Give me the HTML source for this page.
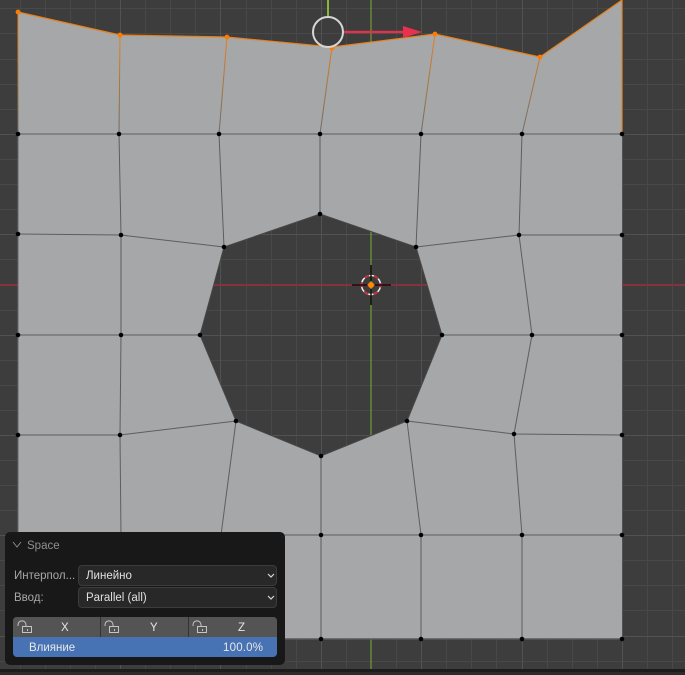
<!DOCTYPE html>
<html><head><meta charset="utf-8">
<style>
html,body{margin:0;padding:0;width:685px;height:675px;overflow:hidden;background:#3d3d3d;font-family:"Liberation Sans","Noto Sans CJK SC",sans-serif}
svg{position:absolute;left:0;top:0}
.t{position:absolute;font-size:11.5px;line-height:14px;white-space:nowrap;color:#d8d8d8}
#panel{position:absolute;left:5px;top:532px;width:280px;height:133px;background:#181818;border-radius:5px}
.dd{position:absolute;left:78px;width:197px;height:19px;background:#282828;border:1px solid #3c3c3c;border-radius:4px;box-sizing:content-box}
</style></head><body>
<svg width="685" height="675" viewBox="0 0 685 675">
<defs>
<linearGradient id="g0" gradientUnits="userSpaceOnUse" x1="0" y1="35" x2="0" y2="134"><stop offset="0" stop-color="#e8801a"/><stop offset="1" stop-color="#6a6a6a"/></linearGradient>
</defs>
<g stroke="#484848" stroke-width="1" shape-rendering="crispEdges">
<path d="M20.500 0V670M45.500 0V670M70.500 0V670M95.500 0V670M145.500 0V670M170.500 0V670M195.500 0V670M246.500 0V670M271.500 0V670M296.500 0V670M346.500 0V670M396.500 0V670M446.500 0V670M471.500 0V670M496.500 0V670M547.500 0V670M572.500 0V670M597.500 0V670M647.500 0V670M672.500 0V670"/>
<path d="M0 8.500H685M0 33.500H685M0 59.500H685M0 84.500H685M0 109.500H685M0 159.500H685M0 184.500H685M0 209.500H685M0 259.500H685M0 310.500H685M0 360.500H685M0 385.500H685M0 410.500H685M0 460.500H685M0 485.500H685M0 510.500H685M0 560.500H685M0 585.500H685M0 610.500H685M0 661.500H685"/>
</g>
<g stroke="#525252" stroke-width="1" shape-rendering="crispEdges">
<path d="M120.500 0V670M220.500 0V670M321.500 0V670M421.500 0V670M522.500 0V670M622.500 0V670"/>
<path d="M0 134.500H685M0 234.500H685M0 335.500H685M0 435.500H685M0 535.500H685M0 636.500H685"/>
</g>
<path d="M0 285H685" stroke="#85323f" stroke-width="2"/>
<path d="M371 0V670" stroke="#6a8f3a" stroke-width="1.400"/>
<path fill-rule="evenodd" fill="#a6a7a8" d="M18 12L120 35L227 37L332 47L435 34L540 57L622 0V639H18ZM320 214L416 247L442 335L407 421L321 456L236 421L200 335L224 247Z"/>
<g fill="none" stroke="#5e5e5e" stroke-width="1">
<path d="M18 134H622M18 234L121 235L224 247M416 247L519 235L622 235M18 335H121L200 335M442 335H532L622 335M18 435H120L236 421M407 421L514 434L622 435M18 535H622"/>
<path d="M119 134L121 235V335L120 435L121 535L120 639M219 134L224 247M236 421L221 535L220 639M320 134V214M321 456V639M421 134L416 247M407 421L421 535V639M522 134L519 235L532 335L514 434L522 535V639"/>
<path d="M320 214L416 247L442 335L407 421L321 456L236 421L200 335L224 247Z" stroke="#474747"/>
<path d="M18 134V639H622" stroke="#666"/>
<path d="M18 639H622" stroke="#5a5a5a" stroke-width="1.500"/>
</g>
<g fill="none" stroke-width="1">
<path d="M120 35L119 134" stroke="url(#g0)"/>
<path d="M227 37L219 134" stroke="url(#g0)"/>
<path d="M332 47L320 134" stroke="url(#g0)"/>
<path d="M435 34L421 134" stroke="url(#g0)"/>
<path d="M540 57L522 134" stroke="url(#g0)"/>
<path d="M18 12L18 134" stroke="url(#g0)"/>
<path d="M622 0L622 134" stroke="#e8801a"/>
<path d="M18 12L120 35L227 37L332 47L435 34L540 57L622 0" stroke="#e8801a" stroke-width="1.200"/>
</g>
<g fill="none" stroke="#000" stroke-width="4.600" stroke-linecap="round">
<path d="M18 134h0M119 134h0M219 134h0M320 134h0M421 134h0M522 134h0M622 134h0"/>
<path d="M18 234h0M121 235h0M224 247h0M320 214h0M416 247h0M519 235h0M622 235h0"/>
<path d="M18 335h0M121 335h0M200 335h0M442 335h0M532 335h0M622 335h0"/>
<path d="M18 435h0M120 435h0M236 421h0M321 456h0M407 421h0M514 434h0M622 435h0"/>
<path d="M121 535h0M221 535h0M321 535h0M421 535h0M522 535h0M622 535h0"/>
<path d="M120 639h0M220 639h0M321 639h0M421 639h0M522 639h0M622 639h0"/>
</g>
<path d="M18 12h0M120 35h0M227 37h0M332 48h0M435 34h0M540 57h0" fill="none" stroke="#ff7a00" stroke-width="4.800" stroke-linecap="round"/>
<path d="M328 0V17" stroke="#86b83a" stroke-width="2"/>
<path d="M344 32H404" stroke="#d9354f" stroke-width="2.500"/>
<path d="M403 26L422 32L403 38Z" fill="#e8304f"/>
<circle cx="328" cy="32" r="15" fill="none" stroke="#d6d6d6" stroke-width="2"/>
<circle cx="371" cy="285" r="9.500" fill="none" stroke="#f2f2f2" stroke-width="1.500"/>
<circle cx="371" cy="285" r="9.500" fill="none" stroke="#d8202a" stroke-width="1.500" stroke-dasharray="5 5" stroke-dashoffset="2.500"/>
<path d="M352 285H367M375 285H391M371 265V281M371 289V305" stroke="#000" stroke-width="1.300"/>
<circle cx="371" cy="285" r="3" fill="#ff8a00"/>
<rect x="0" y="669" width="685" height="3" fill="#1c1c1c"/>
<rect x="0" y="672" width="685" height="3" fill="#2b2b2b"/>
</svg>

<div id="panel"></div>
<div class="t" style="left:27px;top:539px;color:#8f8f8f;font-size:11.500px">Space</div>
<div class="t" style="left:14px;top:569px;color:#a8a8a8">Интерпол...</div>
<div class="t" style="left:14px;top:591px;color:#a8a8a8">Ввод:</div>
<div class="dd" style="top:565px"></div>
<div class="dd" style="top:587px"></div>
<div class="t" style="left:86px;top:569px;color:#e0e0e0">Линейно</div>
<div class="t" style="left:86px;top:591px;color:#e0e0e0">Parallel (all)</div>
<div style="position:absolute;left:13px;top:617px;width:264px;height:40px;background:#4772b3;border-radius:4px;overflow:hidden">
  <div style="position:absolute;left:0;top:0;width:264px;height:20px;background:#545454"></div>
  <div style="position:absolute;left:87px;top:0;width:1px;height:20px;background:#333"></div>
  <div style="position:absolute;left:175px;top:0;width:1px;height:20px;background:#333"></div>
</div>
<div class="t" style="left:61px;top:621px;color:#e6e6e6">X</div>
<div class="t" style="left:150px;top:621px;color:#e6e6e6">Y</div>
<div class="t" style="left:238px;top:621px;color:#e6e6e6">Z</div>
<div class="t" style="left:29px;top:641px;color:#e8e8e8">Влияние</div>
<div class="t" style="left:223px;top:641px;color:#e8e8e8;letter-spacing:.2px">100.0%</div>
<svg width="685" height="675" viewBox="0 0 685 675" style="pointer-events:none">
<g fill="none" stroke="#c4c4c4" stroke-width="1">
<path d="M18 626V625C18 619.500 26 619.500 26 625V627"/>
<rect x="22.500" y="626.500" width="9" height="6"/>
<path d="M105 626V625C105 619.500 113 619.500 113 625V627"/>
<rect x="109.500" y="626.500" width="9" height="6"/>
<path d="M193 626V625C193 619.500 201 619.500 201 625V627"/>
<rect x="197.500" y="626.500" width="9" height="6"/>
</g>
<path d="M27 629h1v2h-1zM114 629h1v2h-1zM202 629h1v2h-1z" fill="#c4c4c4"/>
<g fill="none" stroke="#d8d8d8" stroke-width="1.200">
<path d="M268 574L271 577L274 574M268 596L271 599L274 596"/>
</g>
<path d="M13 542L17 547L21 542" fill="none" stroke="#8a8a8a" stroke-width="1"/>
</svg>
</body></html>
